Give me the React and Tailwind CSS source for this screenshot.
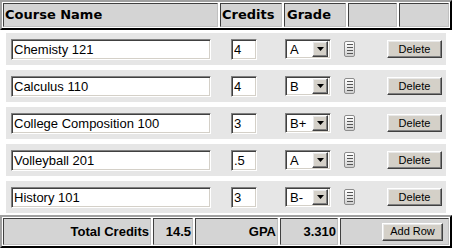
import { useState } from 'react'

const courses = [
  { name: 'Chemisty 121', credits: '4', grade: 'A' },
  { name: 'Calculus 110', credits: '4', grade: 'B' },
  { name: 'College Composition 100', credits: '3', grade: 'B+' },
  { name: 'Volleyball 201', credits: '.5', grade: 'A' },
  { name: 'History 101', credits: '3', grade: 'B-' },
]

const sans = "font-['Liberation_Sans',Arial,sans-serif]"
const inset =
  'border border-t-[#808080] border-l-[#808080] border-r-white border-b-white shadow-[inset_1px_1px_0_#404040,inset_-1px_-1px_0_#d4d0c8]'
const outset =
  'border border-t-white border-l-white border-r-[#404040] border-b-[#404040] shadow-[inset_-1px_-1px_0_#808080,inset_1px_1px_0_#e8e8e8]'
const cell = 'border border-t-[#404040] border-l-[#404040] border-r-[#c0c0c0] border-b-[#c0c0c0] bg-[#d4d4d4]'

function Button({ children, className = '' }) {
  return (
    <button className={`${outset} ${sans} flex h-[18px] items-center justify-center bg-[#d4d0c8] text-[11px] text-black ${className}`}>
      {children}
    </button>
  )
}

function GradeSelect({ value }) {
  return (
    <div className={`${inset} ml-[28px] flex h-[20px] w-[46px] items-center bg-white p-[2px]`}>
      <span className={`${sans} flex-1 pl-[2px] text-[13px] leading-none text-black`}>{value}</span>
      <span className={`${outset} flex h-[16px] w-[16px] items-center justify-center bg-[#d4d0c8]`}>
        <svg width="7" height="4" viewBox="0 0 7 4">
          <path d="M0 0h7L3.5 4z" fill="#000" />
        </svg>
      </span>
    </div>
  )
}

// little notes button next to the grade
function NoteIcon() {
  return (
    <span className="ml-[13px] flex h-[16px] w-[11px] flex-col items-center justify-center gap-[2px] rounded-[2px] border border-[#8c8c8c] bg-gradient-to-b from-white to-[#d0d0d0]">
      <span className="h-px w-[6px] bg-[#555]" />
      <span className="h-px w-[6px] bg-[#555]" />
      <span className="h-px w-[6px] bg-[#555]" />
      <span className="h-px w-[6px] bg-[#555]" />
    </span>
  )
}

function CourseRow({ course }) {
  const [name, setName] = useState(course.name)
  const [credits, setCredits] = useState(course.credits)

  return (
    <div className="flex h-[32px] w-[440px] items-center bg-[#e6e6e6] pl-[5px]">
      <input
        value={name}
        onChange={(e) => setName(e.target.value)}
        className={`${inset} ${sans} h-[21px] w-[200px] bg-white px-[2px] text-[13px] text-black outline-none`}
      />
      <input
        value={credits}
        onChange={(e) => setCredits(e.target.value)}
        className={`${inset} ${sans} ml-[20px] h-[21px] w-[26px] bg-white px-[2px] text-[13px] text-black outline-none`}
      />
      <GradeSelect value={course.grade} />
      <NoteIcon />
      <Button className="ml-[32px] w-[55px]">Delete</Button>
    </div>
  )
}

export default function App() {
  return (
    <div className="h-[249px] w-[453px] bg-white">
      <div className="flex h-[30px] w-[452px] gap-[2px] border-2 border-t-[#a0a0a0] border-l-[#a0a0a0] border-r-black border-b-black p-px font-['DejaVu_Sans',Verdana,sans-serif] text-[13px] font-bold text-black">
        <div className={`${cell} flex w-[215px] items-center pl-[1px]`}>Course Name</div>
        <div className={`${cell} flex w-[62px] items-center pl-[1px]`}>Credits</div>
        <div className={`${cell} flex w-[62px] items-center pl-[2px]`}>Grade</div>
        <div className={`${cell} w-[49px]`} />
        <div className={`${cell} flex-1`} />
      </div>

      <div className="flex flex-col gap-[5px] pl-[6px] pt-[3px]">
        {courses.map((course) => (
          <CourseRow key={course.name} course={course} />
        ))}
      </div>

      <div className={`${sans} mt-[2px] flex h-[33px] w-[452px] gap-[2px] border-2 border-t-[#a0a0a0] border-l-[#a0a0a0] border-r-black border-b-black p-px text-[13px] font-bold text-black`}>
        <div className={`${cell} flex w-[148px] items-center justify-end pr-[1px]`}>Total Credits</div>
        <div className={`${cell} flex w-[40px] items-center justify-end pr-[1px]`}>14.5</div>
        <div className={`${cell} flex w-[83px] items-center justify-end pr-[1px]`}>GPA</div>
        <div className={`${cell} flex w-[58px] items-center justify-end pr-[1px]`}>3.310</div>
        <div className={`${cell} flex flex-1 items-center justify-end pr-[5px]`}>
          <Button className="w-[61px] font-normal">Add Row</Button>
        </div>
      </div>
    </div>
  )
}
